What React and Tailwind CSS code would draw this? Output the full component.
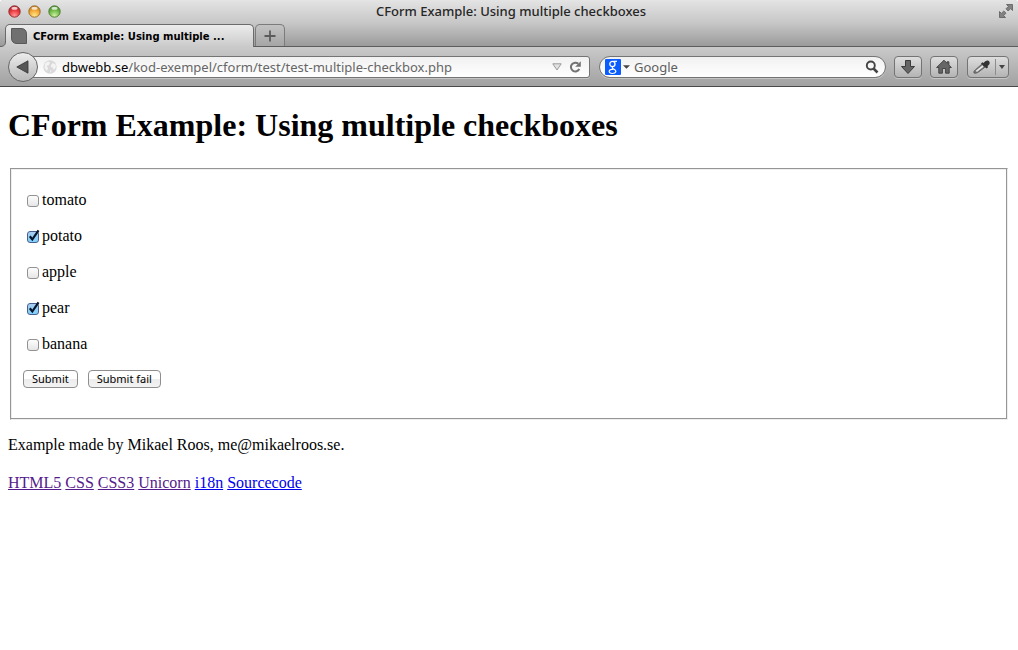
import React, { useState } from "react";

const toolButton =
  "flex h-[22px] items-center justify-center rounded-[4px] border border-[#747474] bg-linear-to-b from-[#dedede] to-[#b4b4b4] shadow-[0_1px_0_#ffffff55]";

function TrafficLight({ label, id, edge, light, mid, dark }) {
  return (
    <button type="button" aria-label={label} className="size-[13px]">
      <svg viewBox="0 0 13 13" className="size-full">
        <defs>
          <radialGradient id={id} cx="0.5" cy="0.85" r="0.85">
            <stop offset="0" stopColor={light} />
            <stop offset="0.5" stopColor={mid} />
            <stop offset="1" stopColor={dark} />
          </radialGradient>
        </defs>
        <circle cx="6.5" cy="6.5" r="5.7" fill={`url(#${id})`} stroke={edge} strokeWidth="0.9" />
        <ellipse cx="6.5" cy="3.2" rx="3" ry="1.5" fill="#fff" opacity="0.75" />
      </svg>
    </button>
  );
}

function TitleBar() {
  return (
    <div className="grid h-6 grid-cols-[1fr_auto_1fr] items-center pr-1 pb-[2px] pl-2">
      <div className="flex gap-[7px]">
        <TrafficLight label="Close" id="red" edge="#8d2a2c" light="#ff9a98" mid="#ee4044" dark="#a81c20" />
        <TrafficLight label="Minimize" id="amber" edge="#99692a" light="#ffe68e" mid="#f5ae3c" dark="#b97014" />
        <TrafficLight label="Zoom" id="green" edge="#4b7a32" light="#cff2a2" mid="#79bf50" dark="#3f8524" />
      </div>
      <div className="text-[13px] leading-5 font-medium text-[#262626]">CForm Example: Using multiple checkboxes</div>
      <button type="button" aria-label="Full screen" className="size-4 justify-self-end">
        <svg viewBox="0 0 16 16" className="size-full" fill="#828282" stroke="#5c5c5c" strokeWidth="0.8">
          <path d="M8.500 1.500h6v6l-1.900-1.900-2.400 2.400-2.200-2.200 2.400-2.400zM1.500 8.500l1.900 1.900 2.400-2.400 2.200 2.200-2.400 2.400 1.900 1.900h-6z" />
        </svg>
      </button>
    </div>
  );
}

function TabStrip() {
  return (
    <div className="flex h-[23px] border-b border-[#5c5c5c] pl-[5px]">
      <div className="relative z-10 flex h-[23px] w-[249px] items-center rounded-t-[5px] border border-b-0 border-[#6b6b6b] bg-linear-to-b from-[#ececec] to-[#cacaca] pl-[5px]">
        <svg viewBox="0 0 6 6" className="absolute bottom-0 -left-[6px] size-[6px]">
          <path d="M0 5.500C4 5.500 5.500 4 5.500 0H6v6H0z" fill="#cacaca" />
          <path d="M0 5.500C4 5.500 5.500 4 5.500 0" fill="none" stroke="#5c5c5c" />
        </svg>
        <svg viewBox="0 0 16 16" className="size-4 shrink-0">
          <path d="M0.500 0.500H10c3.500 0 5.500 2 5.500 5.500v9.500H6c-3.500 0-5.500-2-5.500-5.500z" fill="#707070" stroke="#595959" />
        </svg>
        <span className="pl-[6px] font-['DejaVu_Sans',sans-serif] text-[10px] font-bold whitespace-nowrap text-black">CForm Example: Using multiple ...</span>
      </div>
      <button
        type="button"
        aria-label="Open a new tab"
        className="ml-px flex h-[22px] w-[30px] items-center justify-center rounded-t-[5px] border border-b-0 border-[#7b7b7b] bg-linear-to-b from-[#c3c3c3] to-[#a5a5a5]"
      >
        <svg viewBox="0 0 12 12" className="size-3" stroke="#5b5b5b" strokeWidth="1.800">
          <path d="M6 0.500v11M0.500 6h11" />
        </svg>
      </button>
    </div>
  );
}

function AddressBar() {
  const [path, setPath] = useState("/kod-exempel/cform/test/test-multiple-checkbox.php");
  return (
    <div className="flex min-w-0 flex-[582] items-center">
      <button
        type="button"
        aria-label="Back"
        className="z-10 flex size-[30px] shrink-0 items-center justify-center rounded-full border border-[#666666] bg-linear-to-b from-[#ededed] to-[#b9b9b9]"
      >
        <svg viewBox="0 0 14 14" className="size-[14px]">
          <path d="M0.800 7 12 0.800v12.400z" fill="#565656" stroke="#333" strokeWidth="0.800" />
        </svg>
      </button>
      <div className="-ml-2 flex h-[22px] min-w-0 flex-1 items-center rounded-r-[3px] border border-[#747474] bg-linear-to-b from-[#f1f1f1] to-white pr-[7px] pl-3 shadow-[0_1px_0_#ffffff55]">
        <svg viewBox="0 0 14 14" className="size-[14px] shrink-0">
          <circle cx="7" cy="7" r="6.700" fill="#d9d9d9" />
          <path d="M2 3.500 5 1.500l2 1-1 2.500-2.500 1L5 8l-1 3L1.500 8zM8 5l2-2 2.500 1.500L13 7l-2 3-1.500-2.500L8 7zM7 10l1.500 1-1 2z" fill="#f3f3f3" />
        </svg>
        <label htmlFor="address" className="pl-[5px] text-[13px] leading-5 text-black">dbwebb.se</label>
        <input
          id="address"
          value={path}
          onChange={(e) => setPath(e.target.value)}
          className="min-w-0 flex-1 bg-transparent text-[13px] leading-5 text-[#666666] outline-none"
        />
        <button type="button" aria-label="Show history">
          <svg viewBox="0 0 10 8" className="h-2 w-[10px]">
            <path d="M0.800 0.800h8.400L5 7z" fill="#e2e2e2" stroke="#999" />
          </svg>
        </button>
        <button type="button" aria-label="Reload" className="ml-[6px]">
          <svg viewBox="0 0 14 14" className="size-[14px]">
            <path d="M10.300 3.800A4.400 4.400 0 1 0 11.300 9" fill="none" stroke="#737373" strokeWidth="2" />
            <path d="M12.800 1.200v5.600H7.200z" fill="#737373" />
          </svg>
        </button>
      </div>
    </div>
  );
}

function SearchBar() {
  return (
    <div className="flex h-[22px] min-w-0 flex-[274] items-center rounded-full border border-[#747474] bg-linear-to-b from-[#f1f1f1] to-white pr-[6px] pl-[5px] shadow-[0_1px_0_#ffffff55]">
      <button type="button" aria-label="Choose search engine" className="flex shrink-0 items-center gap-[2px]">
        <svg viewBox="0 0 16 16" className="size-4">
          <rect width="16" height="16" rx="1" fill="#0b5cff" />
          <g fill="none" stroke="#fff">
            <ellipse cx="7.400" cy="5" rx="2.600" ry="2.600" strokeWidth="1.300" />
            <path d="M8.500 2.300h3.500" strokeWidth="1.200" />
            <path d="M8 7.600c-1.200 1.100-.8 1.600.6 2.400 3.600 1.800 2.600 4.500-1.200 4.500-4.400 0-4.600-4.200 1.200-4.300" strokeWidth="1.200" />
          </g>
        </svg>
        <svg viewBox="0 0 8 4" className="h-1 w-[7px]"><path d="M0 0h8L4 4z" fill="#444" /></svg>
      </button>
      <input aria-label="Search" placeholder="Google" className="ml-1 min-w-0 flex-1 bg-transparent text-[13px] leading-5 outline-none placeholder:text-[#5e5e5e]" />
      <button type="button" aria-label="Search the web">
        <svg viewBox="0 0 14 14" className="size-[14px]" fill="none" stroke="#444">
          <circle cx="5.800" cy="5.500" r="4" strokeWidth="1.900" />
          <path d="M8.500 8.500 12.500 12.500" strokeWidth="2.500" />
        </svg>
      </button>
    </div>
  );
}

function Toolbar() {
  return (
    <div className="flex h-10 items-center border-b border-[#484848] bg-linear-to-b from-[#cacaca] to-[#a1a1a1] pr-[9px] pl-2">
      <div className="flex min-w-0 flex-1 items-center gap-[9px]">
        <AddressBar />
        <SearchBar />
      </div>
      <div className="ml-2 flex shrink-0 gap-2">
        <button type="button" aria-label="Downloads" className={`${toolButton} w-7`}>
          <svg viewBox="0 0 16 16" className="size-4">
            <path d="M5.500 1.500h5v6h4L8 14.500 1.500 7.500h4z" fill="#666" stroke="#3c3c3c" />
          </svg>
        </button>
        <button type="button" aria-label="Home" className={`${toolButton} w-7`}>
          <svg viewBox="0 0 16 16" className="size-4">
            <path d="M8 1.200 0.600 8.500h2.200v5.700h3.600v-4.700h3.200v4.700h3.600V8.500h2.200L12.900 6V2.800h-1.800v1.500z" fill="#666" stroke="#3c3c3c" strokeWidth="0.900" />
          </svg>
        </button>
        <div className={`${toolButton} ml-px w-[42px]`}>
          <button type="button" aria-label="Pick a colour" className="flex flex-1 justify-center">
            <svg viewBox="0 0 18 16" className="h-4 w-[18px]">
              <path d="M1 14c-.5-1.500.3-2.400 1.500-3.300L9 5l3.200 3-6.700 5C4 14 2.500 14.600 1 14z" fill="#777" stroke="#555" strokeWidth="0.800" />
              <path d="M3.300 12.300 10 7" stroke="#e8e8e8" strokeWidth="1.700" />
              <path d="M8 4.500 9.500 3.200l1.200.8c1-1.600 3.300-3 5-2.100s1.200 3.800-1.200 5l.6 1.300-1.600 1.200z" fill="#333" />
            </svg>
          </button>
          <span className="h-4 w-px bg-[#8c8c8c]" />
          <button type="button" aria-label="Colour options" className="flex w-3 justify-center">
            <svg viewBox="0 0 6 4" className="h-1 w-[6px]"><path d="M0 0h6L3 4z" fill="#444" /></svg>
          </button>
        </div>
      </div>
    </div>
  );
}

function CheckItem({ name, initial }) {
  return (
    <div className="flex items-center pl-1 leading-5">
      <span className="relative mt-[2px] mr-[3px] size-3">
        <input
          type="checkbox"
          id={name}
          name="items[]"
          value={name}
          defaultChecked={initial}
          className="peer block size-3 appearance-none rounded-[3px] border border-[#929292] bg-linear-to-b from-[#fdfdfd] to-[#e6e6e6] checked:border-[#465f91] checked:from-[#a9cdf0] checked:to-[#7fd0fb]"
        />
        <svg viewBox="0 0 14 14" className="pointer-events-none absolute -top-[2px] left-0 hidden size-[14px] peer-checked:block">
          <path d="M2.800 7.300 5.300 10.500 11.500 1.300" fill="none" stroke="#061529" strokeWidth="2.200" />
        </svg>
      </span>
      <label htmlFor={name}>{name}</label>
    </div>
  );
}

const formButton =
  "h-[18px] rounded-[4px] border border-[#8e8e8e] bg-linear-to-b from-white from-50% via-[#ececec] via-50% to-[#f3f3f3] px-2 font-['Noto_Sans',sans-serif] text-[11px] leading-4";

const items = [
  ["tomato", false],
  ["potato", true],
  ["apple", false],
  ["pear", true],
  ["banana", false],
];

const links = [
  ["HTML5", true],
  ["CSS", true],
  ["CSS3", true],
  ["Unicorn", true],
  ["i18n", false],
  ["Sourcecode", false],
];

export default function App() {
  return (
    <div className="min-h-screen bg-white">
      <header className="rounded-t-[4px] bg-[#c0c0c0] font-['Noto_Sans',sans-serif]">
        <div className="rounded-t-[4px] bg-linear-to-b from-[#e4e4e4] via-[#c6c6c6] to-[#999999]">
          <TitleBar />
          <TabStrip />
        </div>
        <Toolbar />
      </header>
      <main className="px-2 font-['Liberation_Serif',serif] text-base text-black">
        <h1 className="pt-5 text-[32px] leading-9 font-bold">CForm Example: Using multiple checkboxes</h1>
        <form onSubmit={(e) => e.preventDefault()} className="mx-[2px] mt-[25px]">
          <fieldset className="border border-t-[#959595] border-r-[#eeeeee] border-b-[#eeeeee] border-l-[#959595] px-3 pt-[21px] pb-[31px] shadow-[inset_-1px_-1px_0_#959595,inset_1px_1px_0_#eeeeee]">
            <div className="flex flex-col gap-4">
              {items.map(([name, initial]) => (
                <CheckItem key={name} name={name} initial={initial} />
              ))}
            </div>
            <div className="mt-4 flex gap-[10px]">
              <button type="submit" className={formButton}>Submit</button>
              <button type="submit" className={formButton}>Submit fail</button>
            </div>
          </fieldset>
        </form>
        <footer className="pt-[15px] leading-5">
          <p>Example made by Mikael Roos, me@mikaelroos.se.</p>
          <nav className="mt-[18px] flex flex-wrap gap-1">
            {links.map(([text, visited]) => (
              <a key={text} href={`#${text}`} className={visited ? "text-[#551a8b] underline" : "text-[#0000ee] underline"}>
                {text}
              </a>
            ))}
          </nav>
        </footer>
      </main>
    </div>
  );
}
